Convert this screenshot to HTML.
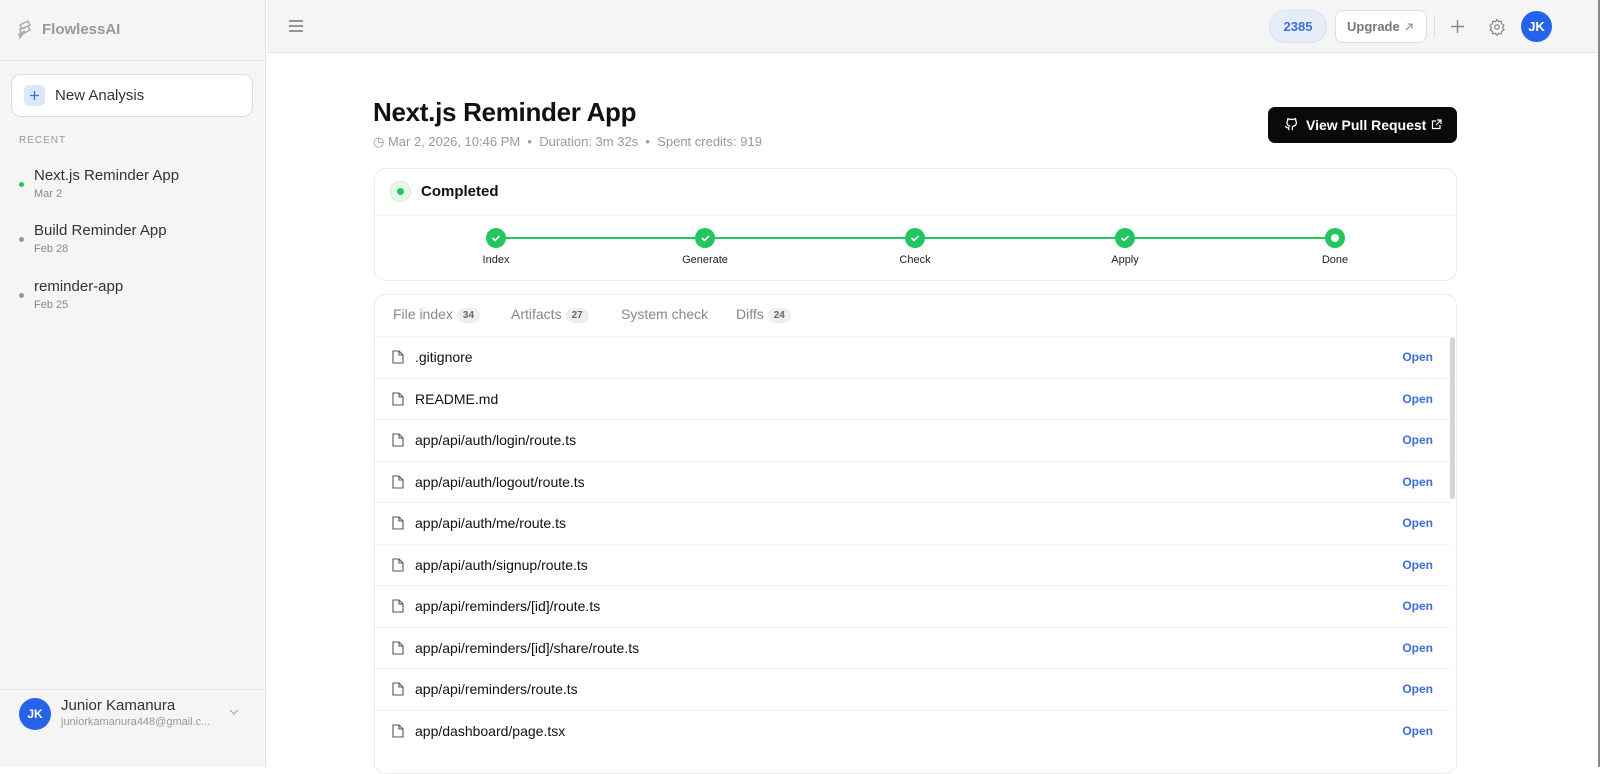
<!DOCTYPE html>
<html><head><meta charset="utf-8"><style>
*{box-sizing:border-box;margin:0;padding:0}
body{width:1600px;height:767px;overflow:hidden;font-family:"Liberation Sans",Arial,sans-serif;background:#fff;position:relative;color:#111}
.a{position:absolute}
.side{left:0;top:0;width:266px;height:767px;background:#f5f5f5;border-right:1px solid #e5e5e5}
.top{left:267px;top:0;width:1331px;height:53px;background:#f5f5f5;border-bottom:1px solid #e5e5e5}
.edge{left:1598px;top:0;width:2px;height:767px;background:#888}
.rec{left:34px;font-size:15px;color:#333}
.rd{left:34px;font-size:11px;color:#888}
.dot{left:19px;width:5px;height:5px;border-radius:50%;background:#999}
.card{border:1px solid #ebebeb;border-radius:12px;background:#fff}
.step{width:20px;height:20px;border-radius:50%;background:#22c55e;top:228px}
.sl{top:254px;font-size:11px;color:#222;width:100px;text-align:center}
.row{left:375px;width:1075px;height:41.5px;border-top:1px solid #efefef;font-size:14px;color:#111}
.row span.n{position:absolute;left:40px;top:12px}
.row span.o{position:absolute;right:17px;top:13px;font-size:12px;font-weight:bold;color:#3b6fd8}
.row svg{position:absolute;left:17px;top:13px}
.tab{top:306px;font-size:14px;color:#888}
.bd{display:inline-block;background:#eee;border-radius:8px;font-size:10px;font-weight:bold;color:#666;padding:2px 6px;margin-left:4px;vertical-align:1px}
</style></head><body>
<div class="a side"></div>
<div class="a" style="left:0;top:60px;width:266px;height:1px;background:#e5e5e5"></div>
<svg class="a" style="left:17px;top:20px" width="16" height="20" viewBox="0 0 16 20" fill="none" stroke="#aaa" stroke-width="1.4"><path d="M3 5l8-4 2 4-8 4zM3 9l8-3 2 4-9 5zM2 14l6-3-5 7z"/></svg>
<div class="a" style="left:42px;top:21px;font-size:15px;font-weight:bold;color:#999">FlowlessAI</div>
<div class="a" style="left:11px;top:74px;width:242px;height:43px;background:#fff;border:1px solid #ddd;border-radius:10px"></div>
<div class="a" style="left:24px;top:85px;width:21px;height:21px;background:#dbe7fb;border-radius:5px"></div>
<svg class="a" style="left:29px;top:90px" width="11" height="11" viewBox="0 0 11 11" stroke="#3b6fd8" stroke-width="1.3"><path d="M5.5 1v9M1 5.5h9"/></svg>
<div class="a" style="left:55px;top:87px;font-size:15px;color:#333">New Analysis</div>
<div class="a" style="left:19px;top:135px;font-size:10px;letter-spacing:1px;color:#999">RECENT</div>
<div class="a dot" style="top:182px;background:#22c55e"></div>
<div class="a rec" style="top:167px">Next.js Reminder App</div><div class="a rd" style="top:188px">Mar 2</div>
<div class="a dot" style="top:237px"></div>
<div class="a rec" style="top:222px">Build Reminder App</div><div class="a rd" style="top:243px">Feb 28</div>
<div class="a dot" style="top:293px"></div>
<div class="a rec" style="top:278px">reminder-app</div><div class="a rd" style="top:299px">Feb 25</div>
<div class="a" style="left:0;top:689px;width:266px;height:1px;background:#e5e5e5"></div>
<div class="a" style="left:19px;top:698px;width:32px;height:32px;border-radius:50%;background:#2563eb;color:#fff;font-size:12px;font-weight:bold;text-align:center;line-height:32px">JK</div>
<div class="a" style="left:61px;top:697px;font-size:15px;color:#333">Junior Kamanura</div>
<div class="a" style="left:61px;top:716px;font-size:11px;color:#999">juniorkamanura448@gmail.c...</div>
<svg class="a" style="left:229px;top:709px" width="10" height="6" viewBox="0 0 10 6" fill="none" stroke="#aaa" stroke-width="1.2"><path d="M1 1l4 4 4-4"/></svg>

<div class="a top"></div>
<svg class="a" style="left:288px;top:19px" width="16" height="14" viewBox="0 0 16 14" stroke="#777" stroke-width="1.5"><path d="M1 2h14M1 7h14M1 12h14"/></svg>
<div class="a" style="left:1269px;top:10px;width:58px;height:33px;border-radius:16px;background:#e6edf8;border:1px solid #d8e2f2;color:#3b6fd8;font-weight:bold;font-size:13px;text-align:center;line-height:31px">2385</div>
<div class="a" style="left:1335px;top:10px;width:92px;height:33px;border-radius:8px;background:#fff;border:1px solid #ddd;color:#777;font-size:13px;font-weight:bold;line-height:31px;padding-left:11px">Upgrade</div>
<svg class="a" style="left:1405px;top:23px" width="8" height="8" viewBox="0 0 8 8" fill="none" stroke="#888" stroke-width="1.1"><path d="M1 7l6-6M2.5 1H7v4.5"/></svg>
<div class="a" style="left:1434px;top:16px;width:1px;height:22px;background:#ddd"></div>
<svg class="a" style="left:1451px;top:20px" width="13" height="13" viewBox="0 0 13 13" stroke="#888" stroke-width="1.4"><path d="M6.5 0v13M0 6.5h13"/></svg>
<svg class="a" style="left:1488px;top:18px" width="18" height="18" viewBox="0 0 24 24" fill="none" stroke="#888" stroke-width="1.6"><circle cx="12" cy="12" r="3"/><path d="M12 2l2 3 3.5-.8.8 3.5 3 2-2 3 2 3-3 2-.8 3.5-3.5-.8-2 3-2-3-3.5.8-.8-3.5-3-2 2-3-2-3 3-2 .8-3.5 3.5.8z"/></svg>
<div class="a" style="left:1521px;top:11px;width:31px;height:31px;border-radius:50%;background:#2563eb;color:#fff;font-size:13px;font-weight:bold;text-align:center;line-height:31px">JK</div>
<div class="a edge"></div>

<div class="a" style="left:373px;top:97px;font-size:26px;font-weight:bold;color:#111;letter-spacing:-0.3px">Next.js Reminder App</div>
<div class="a" style="left:373px;top:134px;font-size:13px;color:#999">◷ Mar 2, 2026, 10:46 PM &nbsp;•&nbsp; Duration: 3m 32s &nbsp;•&nbsp; Spent credits: 919</div>
<div class="a" style="left:1268px;top:107px;width:189px;height:36px;background:#0a0a0a;border-radius:7px;color:#fff;font-size:14px;font-weight:bold;line-height:36px;padding-left:38px">View Pull Request</div>
<svg class="a" style="left:1431px;top:119px" width="11" height="11" viewBox="0 0 11 11" fill="none" stroke="#fff" stroke-width="1.2"><path d="M5 2H1.5v7.5H9V6M6 1h4v4M10 1L5 6"/></svg>
<svg class="a" style="left:1283px;top:117px" width="15" height="15" viewBox="0 0 16 16" fill="none" stroke="#fff" stroke-width="1.4"><path d="M6 14v-2.5c-2.5.5-3-1-3.5-1.8M10 14v-2.5c0-1 .3-1.3.8-1.7 2-.3 3.5-1.2 3.5-4 0-.8-.3-1.5-.8-2 .1-.5.1-1.4-.2-2-1 0-1.800.6-2.2.9a7 7 0 0 0-3.6 0C7 2.4 6.2 1.8 5.2 1.8c-.3.6-.3 1.5-.2 2-.5.5-.8 1.2-.8 2 0 2.8 1.5 3.700 3.5 4"/></svg>

<div class="a card" style="left:374px;top:168px;width:1083px;height:113px"></div>
<div class="a" style="left:374px;top:215px;width:1083px;height:1px;background:#efefef"></div>
<div class="a" style="left:390px;top:181px;width:21px;height:21px;border-radius:50%;background:#e8f8ee;border:1px solid #c9eed6"></div>
<div class="a" style="left:397px;top:188px;width:7px;height:7px;border-radius:50%;background:#22c55e"></div>
<div class="a" style="left:421px;top:183px;font-size:15px;font-weight:bold;color:#111">Completed</div>
<div class="a" style="left:496px;top:237px;width:839px;height:2px;background:#22c55e"></div>
<div class="a step" style="left:486px"></div><div class="a step" style="left:695px"></div><div class="a step" style="left:905px"></div><div class="a step" style="left:1115px"></div>
<div class="a step" style="left:1325px"></div><div class="a" style="left:1331px;top:234px;width:8px;height:8px;border-radius:50%;background:#fff"></div>
<svg class="a" style="left:486px;top:228px" width="860" height="20"><g fill="none" stroke="#fff" stroke-width="1.6"><path d="M6.5 10l2.5 2.5 4.5-4.5"/><path transform="translate(209.5 0)" d="M6.5 10l2.5 2.5 4.5-4.5"/><path transform="translate(419 0)" d="M6.5 10l2.5 2.5 4.5-4.5"/><path transform="translate(629 0)" d="M6.5 10l2.5 2.5 4.5-4.5"/></g></svg>
<div class="a sl" style="left:446px">Index</div><div class="a sl" style="left:655px">Generate</div><div class="a sl" style="left:865px">Check</div><div class="a sl" style="left:1075px">Apply</div><div class="a sl" style="left:1285px">Done</div>

<div class="a card" style="left:374px;top:294px;width:1083px;height:480px"></div>
<div class="a tab" style="left:393px">File index<span class="bd">34</span></div>
<div class="a tab" style="left:511px">Artifacts<span class="bd">27</span></div>
<div class="a tab" style="left:621px">System check</div>
<div class="a tab" style="left:736px">Diffs<span class="bd">24</span></div>
<div class="a" style="left:1450px;top:337px;width:5px;height:162px;border-radius:3px;background:#d5d5d5"></div>

<div class="a row" style="top:336px"><svg width="12" height="14" viewBox="0 0 12 14" fill="none" stroke="#555" stroke-width="1.1"><path d="M1 1h6l4 4v8H1zM7 1v4h4"/></svg><span class="n">.gitignore</span><span class="o">Open</span></div>
<div class="a row" style="top:377.5px"><svg width="12" height="14" viewBox="0 0 12 14" fill="none" stroke="#555" stroke-width="1.1"><path d="M1 1h6l4 4v8H1zM7 1v4h4"/></svg><span class="n">README.md</span><span class="o">Open</span></div>
<div class="a row" style="top:419px"><svg width="12" height="14" viewBox="0 0 12 14" fill="none" stroke="#555" stroke-width="1.1"><path d="M1 1h6l4 4v8H1zM7 1v4h4"/></svg><span class="n">app/api/auth/login/route.ts</span><span class="o">Open</span></div>
<div class="a row" style="top:460.5px"><svg width="12" height="14" viewBox="0 0 12 14" fill="none" stroke="#555" stroke-width="1.1"><path d="M1 1h6l4 4v8H1zM7 1v4h4"/></svg><span class="n">app/api/auth/logout/route.ts</span><span class="o">Open</span></div>
<div class="a row" style="top:502px"><svg width="12" height="14" viewBox="0 0 12 14" fill="none" stroke="#555" stroke-width="1.1"><path d="M1 1h6l4 4v8H1zM7 1v4h4"/></svg><span class="n">app/api/auth/me/route.ts</span><span class="o">Open</span></div>
<div class="a row" style="top:543.5px"><svg width="12" height="14" viewBox="0 0 12 14" fill="none" stroke="#555" stroke-width="1.1"><path d="M1 1h6l4 4v8H1zM7 1v4h4"/></svg><span class="n">app/api/auth/signup/route.ts</span><span class="o">Open</span></div>
<div class="a row" style="top:585px"><svg width="12" height="14" viewBox="0 0 12 14" fill="none" stroke="#555" stroke-width="1.1"><path d="M1 1h6l4 4v8H1zM7 1v4h4"/></svg><span class="n">app/api/reminders/[id]/route.ts</span><span class="o">Open</span></div>
<div class="a row" style="top:626.5px"><svg width="12" height="14" viewBox="0 0 12 14" fill="none" stroke="#555" stroke-width="1.1"><path d="M1 1h6l4 4v8H1zM7 1v4h4"/></svg><span class="n">app/api/reminders/[id]/share/route.ts</span><span class="o">Open</span></div>
<div class="a row" style="top:668px"><svg width="12" height="14" viewBox="0 0 12 14" fill="none" stroke="#555" stroke-width="1.1"><path d="M1 1h6l4 4v8H1zM7 1v4h4"/></svg><span class="n">app/api/reminders/route.ts</span><span class="o">Open</span></div>
<div class="a row" style="top:709.5px"><svg width="12" height="14" viewBox="0 0 12 14" fill="none" stroke="#555" stroke-width="1.1"><path d="M1 1h6l4 4v8H1zM7 1v4h4"/></svg><span class="n">app/dashboard/page.tsx</span><span class="o">Open</span></div>
<div class="a" style="left:267px;top:751px;width:1331px;height:16px;background:#fff"></div>
<div class="a" style="left:374px;top:751px;width:1px;height:16px;background:#ebebeb"></div>
<div class="a" style="left:1456px;top:751px;width:1px;height:16px;background:#ebebeb"></div>
</body></html>
